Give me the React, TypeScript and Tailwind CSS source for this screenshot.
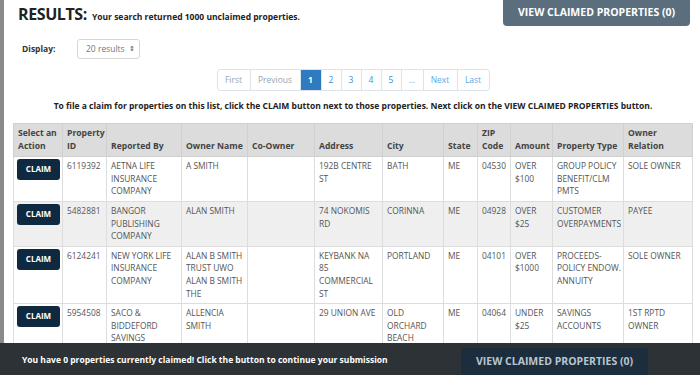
import React from "react";

type Row = {
  id: string;
  rep: string[];
  owner: string[];
  co: string[];
  addr: string[];
  city: string[];
  state: string;
  zip: string;
  amt: string[];
  type: string[];
  rel: string[];
};

const rows: Row[] = [
  { id: "6119392", rep: ["AETNA LIFE", "INSURANCE", "COMPANY"], owner: ["A SMITH"], co: [], addr: ["192B CENTRE", "ST"], city: ["BATH"], state: "ME", zip: "04530", amt: ["OVER", "$100"], type: ["GROUP POLICY", "BENEFIT/CLM", "PMTS"], rel: ["SOLE OWNER"] },
  { id: "5482881", rep: ["BANGOR", "PUBLISHING", "COMPANY"], owner: ["ALAN SMITH"], co: [], addr: ["74 NOKOMIS", "RD"], city: ["CORINNA"], state: "ME", zip: "04928", amt: ["OVER", "$25"], type: ["CUSTOMER", "OVERPAYMENTS"], rel: ["PAYEE"] },
  { id: "6124241", rep: ["NEW YORK LIFE", "INSURANCE", "COMPANY"], owner: ["ALAN B SMITH", "TRUST UWO", "ALAN B SMITH", "THE"], co: [], addr: ["KEYBANK NA", "85", "COMMERCIAL", "ST"], city: ["PORTLAND"], state: "ME", zip: "04101", amt: ["OVER", "$1000"], type: ["PROCEEDS-", "POLICY ENDOW.", "ANNUITY"], rel: ["SOLE OWNER"] },
  { id: "5954508", rep: ["SACO &", "BIDDEFORD", "SAVINGS"], owner: ["ALLENCIA", "SMITH"], co: [], addr: ["29 UNION AVE"], city: ["OLD", "ORCHARD", "BEACH"], state: "ME", zip: "04064", amt: ["UNDER", "$25"], type: ["SAVINGS", "ACCOUNTS"], rel: ["1ST RPTD", "OWNER"] },
];

const Lines = ({ l }: { l: string[] }) => (
  <>
    {l.map((s, i) => (
      <div key={i} className="whitespace-nowrap">{s}</div>
    ))}
  </>
);

const widths = [49, 44, 75, 66, 67, 68, 61, 34, 33, 42, 71, 69];

export default function App() {
  const td = "border border-[#dddddd] px-[4px] pt-[3px] pb-[3px] align-top";
  const th = "border border-[#d0d0d0] px-[4px] pt-[3px] pb-[4px] align-bottom text-left font-bold whitespace-nowrap";
  return (
    <div
      className="relative w-[700px] h-[375px] overflow-hidden bg-white flex"
      style={{ fontFamily: '"Open Sans", "Liberation Sans", sans-serif' }}
    >
      <div className="w-[4px] h-full bg-[#8a8a8a] shrink-0" />
      <div className="flex-1 flex flex-col min-w-0">
        {/* header */}
        <div className="h-[26px] flex items-center justify-between pl-[14px] pr-[10px]">
          <div className="flex items-baseline gap-[5px] text-[#222] pt-[2px]">
            <span className="text-[16px] font-bold tracking-[-0.4px]">RESULTS:</span>
            <span className="text-[8.5px] font-bold">Your search returned 1000 unclaimed properties.</span>
          </div>
          <div className="self-start -mt-[4px] h-[30px] w-[187px] rounded-[4px] bg-[#5a6e7e] text-white text-[10.5px] font-bold flex items-center justify-center pt-[4px]">
            VIEW CLAIMED PROPERTIES (0)
          </div>
        </div>
        {/* display */}
        <div className="mt-[13px] flex items-center pl-[18px]">
          <span className="text-[8.5px] font-bold text-[#333] w-[55px]">Display:</span>
          <div className="h-[20px] w-[63px] border border-[#d6d6d6] rounded-[3px] flex items-center pl-[8px] text-[8.5px] text-[#777]">
            20 results <span className="ml-[4px] text-[7px] text-[#444]">⇕</span>
          </div>
        </div>
        {/* pagination */}
        <div className="mt-[10px] flex justify-center pl-[2px]">
          <div className="flex h-[22px] border border-[#dde3e8] rounded-[3px] overflow-hidden text-[8.5px]">
            {[
              ["First", 32, "text-[#9aa5ad]"],
              ["Previous", 50, "text-[#9aa5ad]"],
              ["1", 21, "bg-[#2e7bbf] text-white font-bold"],
              ["2", 20, "text-[#3d8fd6]"],
              ["3", 20, "text-[#3d8fd6]"],
              ["4", 20, "text-[#3d8fd6]"],
              ["5", 20, "text-[#3d8fd6]"],
              ["...", 22, "text-[#9aa5ad]"],
              ["Next", 34, "text-[#5aaae6]"],
              ["Last", 32, "text-[#5aaae6]"],
            ].map(([t, w, c], i) => (
              <div
                key={i}
                className={`flex items-center justify-center ${i > 0 ? "border-l border-[#dde3e8]" : ""} ${c}`}
                style={{ width: w as number }}
              >
                {t}
              </div>
            ))}
          </div>
        </div>
        {/* instructions */}
        <div className="mt-[9px] text-center text-[8.5px] font-bold text-[#222] leading-[12px] pl-[2px]">
          To file a claim for properties on this list, click the CLAIM button next to those properties. Next click on the VIEW CLAIMED PROPERTIES button.
        </div>
        {/* table */}
        <div className="mt-[11px] pl-[9px]">
          <table className="border-collapse text-[8.4px] leading-[12.6px] table-fixed" style={{ width: 679 }}>
            <colgroup>
              {widths.map((w, i) => (
                <col key={i} style={{ width: w }} />
              ))}
            </colgroup>
            <thead>
              <tr className="bg-[#dcdcdc] text-[#444] h-[33px] text-[8.6px]">
                <th className={th}>Select an<br />Action</th>
                <th className={th}>Property<br />ID</th>
                <th className={th}>Reported By</th>
                <th className={th}>Owner Name</th>
                <th className={th}>Co-Owner</th>
                <th className={th}>Address</th>
                <th className={th}>City</th>
                <th className={th}>State</th>
                <th className={th}>ZIP<br />Code</th>
                <th className={th}>Amount</th>
                <th className={th}>Property Type</th>
                <th className={th}>Owner<br />Relation</th>
              </tr>
            </thead>
            <tbody className="text-[#555]">
              {rows.map((r, i) => (
                <tr key={i} className={i === 1 ? "bg-[#efefef]" : "bg-white"}>
                  <td className="border border-[#dddddd] pl-[3px] pt-[2px] align-top">
                    <div className="w-[43px] h-[21px] rounded-[3px] bg-[#0f2a40] text-white text-[8px] font-bold flex items-center justify-center">
                      CLAIM
                    </div>
                  </td>
                  <td className={td}>{r.id}</td>
                  <td className={td}><Lines l={r.rep} /></td>
                  <td className={td}><Lines l={r.owner} /></td>
                  <td className={td}><Lines l={r.co} /></td>
                  <td className={td}><Lines l={r.addr} /></td>
                  <td className={td}><Lines l={r.city} /></td>
                  <td className={td}>{r.state}</td>
                  <td className={td}>{r.zip}</td>
                  <td className={td}><Lines l={r.amt} /></td>
                  <td className={td}><Lines l={r.type} /></td>
                  <td className={td}><Lines l={r.rel} /></td>
                </tr>
              ))}
            </tbody>
          </table>
        </div>
      </div>
      {/* bottom bar */}
      <div className="absolute left-0 right-0 bottom-0 h-[32px] bg-[#2d3236] flex items-center">
        <div className="pl-[22px] text-[8.5px] font-bold text-white w-[461px] shrink-0 pt-[3px] whitespace-nowrap">
          You have 0 properties currently claimed! Click the button to continue your submission
        </div>
        <div className="self-end h-[27px] w-[187px] rounded-t-[4px] bg-[#1c2e3d] text-[#b9c5cf] text-[10.5px] font-bold flex items-center justify-center">
          VIEW CLAIMED PROPERTIES (0)
        </div>
      </div>
    </div>
  );
}
